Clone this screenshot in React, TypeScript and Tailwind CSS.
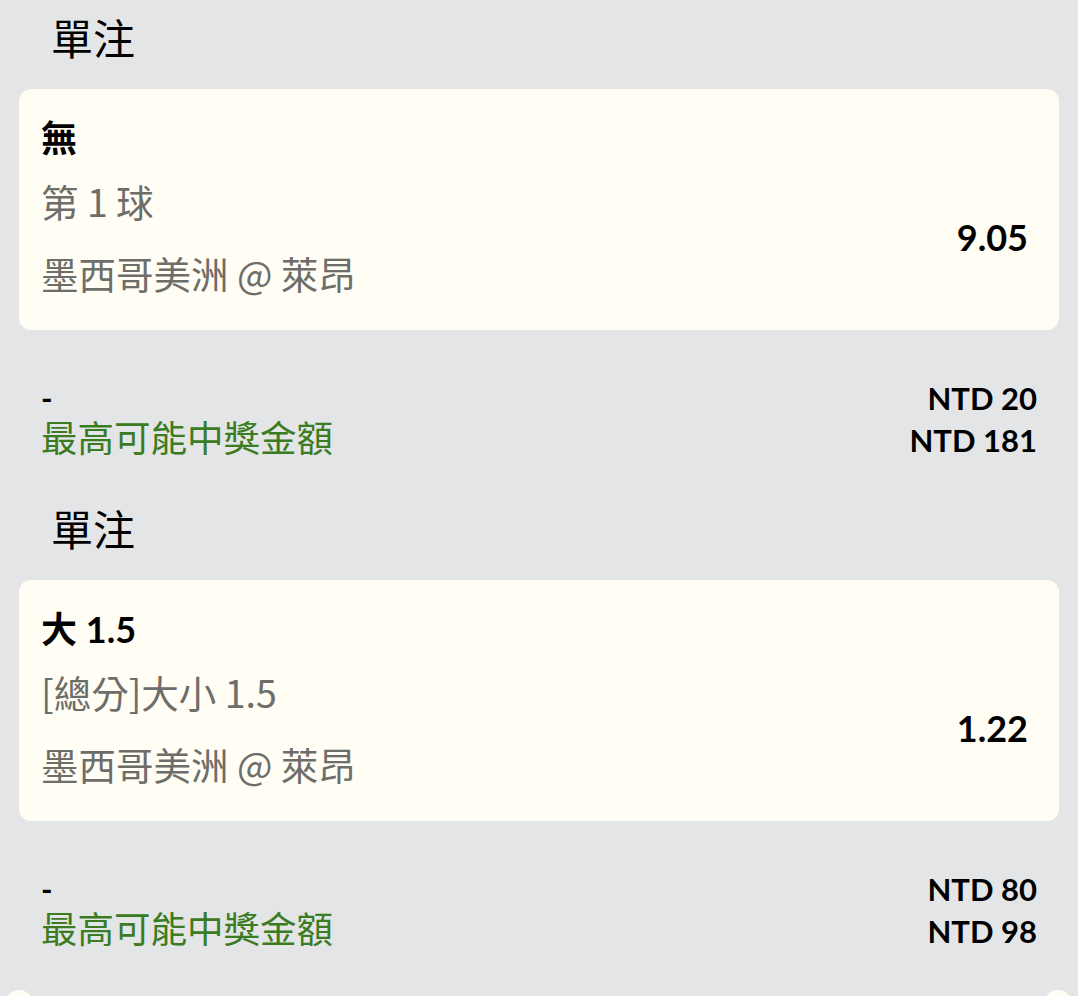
const FONT = "font-['Lato','Noto_Sans_CJK_TC',sans-serif]";

type Bet = {
  pick: string;
  market: string;
  match: string;
  odds: string;
  stake: string;
  payout: string;
};

const bets: Bet[] = [
  { pick: "無", market: "第 1 球", match: "墨西哥美洲 @ 萊昂", odds: "9.05", stake: "NTD 20", payout: "NTD 181" },
  { pick: "大 1.5", market: "[總分]大小 1.5", match: "墨西哥美洲 @ 萊昂", odds: "1.22", stake: "NTD 80", payout: "NTD 98" },
];

const BetSection = ({ bet, last }: { bet: Bet; last: boolean }) => {
  return (
    <section className={last ? "" : "pb-[51px]"}>
      {/* header */}
      <h2 className="pl-[51px] text-[42px] leading-[42px] font-normal text-black">單注</h2>

      {/* selection card */}
      <div className="mx-[19px] mt-[29px] h-[241px] rounded-[12px] bg-[#fffdf4] pl-[22px] pr-[31px] pt-[31px]">
        <div className="text-[36px] leading-[36px] font-bold text-black">{bet.pick}</div>
        <div className="mt-[27px] flex items-center justify-between">
          <div className="font-['Noto_Sans_CJK_TC',sans-serif] text-[37.5px] leading-[36px] text-[#6d6d69]">
            <div>{bet.market}</div>
            <div className="mt-[36px]">{bet.match}</div>
          </div>
          <div className="text-[36px] leading-[36px] font-bold text-black">{bet.odds}</div>
        </div>
      </div>

      {/* stake / payout */}
      <div className="mt-[48px] px-[41px]">
        <div className="flex items-baseline justify-between h-[40px] leading-[40px]">
          <span className="text-[31px] font-bold text-black">-</span>
          <span className="text-[31px] font-bold text-black">{bet.stake}</span>
        </div>
        <div className="flex items-baseline justify-between h-[40px] leading-[40px]">
          <span className="text-[36.5px] text-[#3b7b22]">最高可能中獎金額</span>
          <span className="text-[31px] font-bold text-black">{bet.payout}</span>
        </div>
      </div>
    </section>
  );
};

export default function App() {
  return (
    <div className={`${FONT} min-h-screen w-full bg-[#e4e5e7] pt-[18px] overflow-hidden`}>
      {bets.map((b, i) => (
        <BetSection key={i} bet={b} last={i === bets.length - 1} />
      ))}

      {/* top edge of the next ticket */}
      <div className="mt-[41px] flex h-[30px] justify-between px-[5px] pr-[6px]">
        <div className="h-[28px] w-[28px] rounded-full bg-[#fffdf4]" />
        <div className="h-[28px] w-[28px] rounded-full bg-[#fffdf4]" />
      </div>
    </div>
  );
}
